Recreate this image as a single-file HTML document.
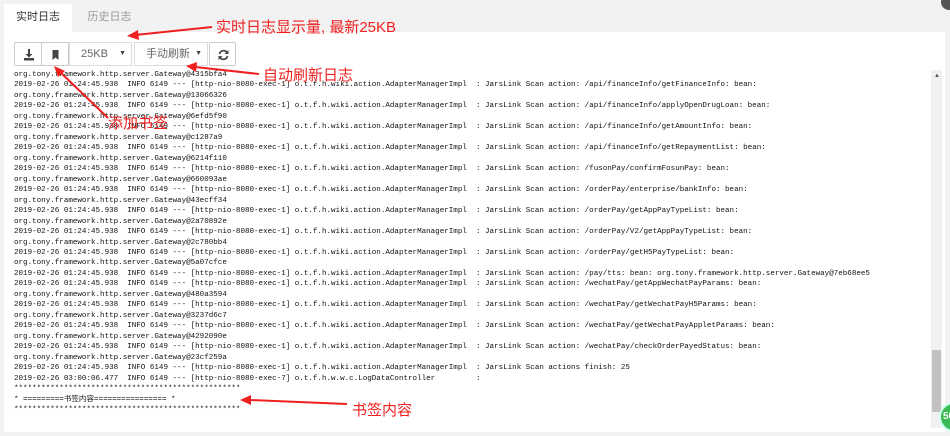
<!DOCTYPE html>
<html><head><meta charset="utf-8"><style>
*{margin:0;padding:0;box-sizing:border-box}
body{width:950px;height:436px;background:#f2f2f2;position:relative;overflow:hidden;font-family:"Liberation Sans","Noto Sans CJK SC",sans-serif}
.tab{position:absolute;top:4px;height:29px;font-size:11px;line-height:27px;text-align:center}
.panel{position:absolute;left:4px;top:32px;width:941px;height:400px;background:#fff}
.btn{position:absolute;top:42px;height:24px;border:1px solid #ccc;background:#fff;border-radius:2px}
.sel{position:absolute;top:42px;height:24px;border:1px solid #ddd;background:#fff;font-size:11px;color:#666;line-height:22px}
pre{position:absolute;left:14px;top:70px;font-family:"Liberation Mono",monospace;font-size:7.55px;line-height:10.47px;color:#111;white-space:pre}
.ann{position:absolute;color:#f02020;font-size:15px;font-family:"Liberation Sans","Noto Sans CJK SC",sans-serif}
</style></head><body>
<div class="tab" style="left:4px;width:68px;background:#fff;color:#333">实时日志</div>
<div class="tab" style="left:72px;width:75px;color:#999">历史日志</div>
<div class="panel"></div>
<div class="btn" style="left:14px;width:28px;border-radius:2px 0 0 2px"><svg width="28" height="24" viewBox="0 0 28 24"><path d="M13 6h2v5h2.5L14 14.5 10.5 11H13z M9 15h10v2.5H9z" fill="#444"/></svg></div>
<div class="btn" style="left:41px;width:28px;border-radius:0 2px 2px 0"><svg width="28" height="24" viewBox="0 0 28 24"><path d="M10.5 7h6v10l-3-2.5-3 2.5z" fill="#444"/></svg></div>
<div class="sel" style="left:69px;width:63px;padding-left:11px">25KB<span style="position:absolute;right:5px;font-size:7px;color:#444">▼</span></div>
<div class="sel" style="left:134px;width:74px;padding-left:11px">手动刷新<span style="position:absolute;right:5px;font-size:7px;color:#444">▼</span></div>
<div class="btn" style="left:209px;width:27px"><svg width="27" height="24" viewBox="0 0 27 24"><path d="M17.5 10a4.3 4.3 0 0 0-8 1M9.5 14a4.3 4.3 0 0 0 8-1" stroke="#444" stroke-width="1.7" fill="none"/><path d="M18.5 7v4h-4zM8.5 17v-4h4z" fill="#444"/></svg></div>
<pre>org.tony.framework.http.server.Gateway@4315bfa4
2019-02-26 01:24:45.938  INFO 6149 --- [http-nio-8080-exec-1] o.t.f.h.wiki.action.AdapterManagerImpl  : JarsLink Scan action: /api/financeInfo/getFinanceInfo: bean:
org.tony.framework.http.server.Gateway@13066326
2019-02-26 01:24:45.938  INFO 6149 --- [http-nio-8080-exec-1] o.t.f.h.wiki.action.AdapterManagerImpl  : JarsLink Scan action: /api/financeInfo/applyOpenDrugLoan: bean:
org.tony.framework.http.server.Gateway@6efd5f90
2019-02-26 01:24:45.938  INFO 6149 --- [http-nio-8080-exec-1] o.t.f.h.wiki.action.AdapterManagerImpl  : JarsLink Scan action: /api/financeInfo/getAmountInfo: bean:
org.tony.framework.http.server.Gateway@c1287a9
2019-02-26 01:24:45.938  INFO 6149 --- [http-nio-8080-exec-1] o.t.f.h.wiki.action.AdapterManagerImpl  : JarsLink Scan action: /api/financeInfo/getRepaymentList: bean:
org.tony.framework.http.server.Gateway@6214f110
2019-02-26 01:24:45.938  INFO 6149 --- [http-nio-8080-exec-1] o.t.f.h.wiki.action.AdapterManagerImpl  : JarsLink Scan action: /fusonPay/confirmFosunPay: bean:
org.tony.framework.http.server.Gateway@660093ae
2019-02-26 01:24:45.938  INFO 6149 --- [http-nio-8080-exec-1] o.t.f.h.wiki.action.AdapterManagerImpl  : JarsLink Scan action: /orderPay/enterprise/bankInfo: bean:
org.tony.framework.http.server.Gateway@43ecff34
2019-02-26 01:24:45.938  INFO 6149 --- [http-nio-8080-exec-1] o.t.f.h.wiki.action.AdapterManagerImpl  : JarsLink Scan action: /orderPay/getAppPayTypeList: bean:
org.tony.framework.http.server.Gateway@2a70892e
2019-02-26 01:24:45.938  INFO 6149 --- [http-nio-8080-exec-1] o.t.f.h.wiki.action.AdapterManagerImpl  : JarsLink Scan action: /orderPay/V2/getAppPayTypeList: bean:
org.tony.framework.http.server.Gateway@2c780bb4
2019-02-26 01:24:45.938  INFO 6149 --- [http-nio-8080-exec-1] o.t.f.h.wiki.action.AdapterManagerImpl  : JarsLink Scan action: /orderPay/getH5PayTypeList: bean:
org.tony.framework.http.server.Gateway@5a07cfce
2019-02-26 01:24:45.938  INFO 6149 --- [http-nio-8080-exec-1] o.t.f.h.wiki.action.AdapterManagerImpl  : JarsLink Scan action: /pay/tts: bean: org.tony.framework.http.server.Gateway@7eb68ee5
2019-02-26 01:24:45.938  INFO 6149 --- [http-nio-8080-exec-1] o.t.f.h.wiki.action.AdapterManagerImpl  : JarsLink Scan action: /wechatPay/getAppWechatPayParams: bean:
org.tony.framework.http.server.Gateway@480a3594
2019-02-26 01:24:45.938  INFO 6149 --- [http-nio-8080-exec-1] o.t.f.h.wiki.action.AdapterManagerImpl  : JarsLink Scan action: /wechatPay/getWechatPayH5Params: bean:
org.tony.framework.http.server.Gateway@3237d6c7
2019-02-26 01:24:45.938  INFO 6149 --- [http-nio-8080-exec-1] o.t.f.h.wiki.action.AdapterManagerImpl  : JarsLink Scan action: /wechatPay/getWechatPayAppletParams: bean:
org.tony.framework.http.server.Gateway@4292090e
2019-02-26 01:24:45.938  INFO 6149 --- [http-nio-8080-exec-1] o.t.f.h.wiki.action.AdapterManagerImpl  : JarsLink Scan action: /wechatPay/checkOrderPayedStatus: bean:
org.tony.framework.http.server.Gateway@23cf259a
2019-02-26 01:24:45.938  INFO 6149 --- [http-nio-8080-exec-1] o.t.f.h.wiki.action.AdapterManagerImpl  : JarsLink Scan actions finish: 25
2019-02-26 03:00:06.477  INFO 6149 --- [http-nio-8080-exec-7] o.t.f.h.w.w.c.LogDataController         :
**************************************************
* =========书签内容================ *
**************************************************</pre>
<div style="position:absolute;left:931px;top:70px;width:11px;height:358px;background:#f1f1f1"></div>
<div style="position:absolute;left:932px;top:350px;width:9px;height:62px;background:#c1c1c1"></div>
<div style="position:absolute;left:934px;top:73px;font-size:6px;color:#555">▲</div>
<div style="position:absolute;left:939px;top:402px;width:30px;height:30px;border-radius:50%;background:#3cba54;border:2px solid #cfe;color:#fff;font-size:10px;font-weight:bold;line-height:26px;padding-left:2px">50</div>
<div style="position:absolute;left:941px;top:-6px;width:16px;height:16px;border-radius:50%;background:#555"></div>
<div class="ann" style="left:216px;top:16px">实时日志显示量, 最新25KB</div>
<div class="ann" style="left:263px;top:64px">自动刷新日志</div>
<div class="ann" style="left:108px;top:112px">添加书签</div>
<div class="ann" style="left:352px;top:399px">书签内容</div>
<svg style="position:absolute;left:0;top:0" width="950" height="436">
<g stroke="#f02020" stroke-width="2" fill="#f02020">
<line x1="212" y1="27" x2="135" y2="35"/><polygon points="127,36 138,30 139,40" stroke="none"/>
<line x1="259" y1="74" x2="195" y2="67"/><polygon points="186,66 197,62 196,72" stroke="none"/>
<line x1="108" y1="118" x2="59" y2="71"/><polygon points="54,66 65,71 58,77" stroke="none"/>
<line x1="347" y1="404" x2="250" y2="400"/><polygon points="240,400 251,395 251,405" stroke="none"/>
</g></svg>
</body></html>
